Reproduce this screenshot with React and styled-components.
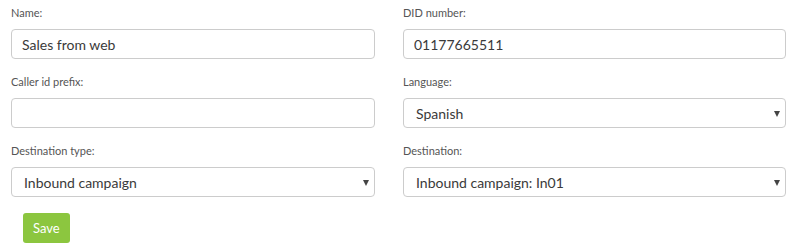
import React from "react";
import styled, { createGlobalStyle } from "styled-components";

const GlobalStyle = createGlobalStyle`
  html, body {
    margin: 0;
    padding: 0;
    background: #fff;
    font-family: Lato, "Open Sans", "Liberation Sans", sans-serif;
  }
`;

const Form = styled.form`
  width: 801px;
  height: 247px;
  box-sizing: border-box;
  padding: 5px 0 0 11px;
`;

const Grid = styled.div`
  display: grid;
  grid-template-columns: 364px 383px;
  column-gap: 28px;
  row-gap: 15px;
`;

const Field = styled.div`
  display: flex;
  flex-direction: column;
`;

const Label = styled.label`
  font-size: 11px;
  line-height: 16px;
  color: #555;
  margin-bottom: 8px;
`;

const TextInput = styled.input`
  box-sizing: border-box;
  width: 100%;
  height: 30px;
  padding: 0 10px;
  border: 1px solid #ccc;
  border-radius: 4px;
  font-family: inherit;
  font-size: 14px;
  color: #3a3a3a;
  background: #fff;
  outline: none;
`;

const SelectWrap = styled.div`
  position: relative;

  &::after {
    content: "";
    position: absolute;
    right: 6px;
    top: 13px;
    border-left: 3.5px solid transparent;
    border-right: 3.5px solid transparent;
    border-top: 6px solid #444;
    pointer-events: none;
  }
`;

const Select = styled.select`
  box-sizing: border-box;
  width: 100%;
  height: 30px;
  padding: 0 12px;
  border: 1px solid #ccc;
  border-radius: 4px;
  font-family: inherit;
  font-size: 14px;
  color: #3a3a3a;
  background: #fff;
  appearance: none;
  -webkit-appearance: none;
  outline: none;
`;

const Actions = styled.div`
  padding: 16px 0 0 12px;
`;

const SaveButton = styled.button`
  height: 30px;
  padding: 0 10px;
  border: none;
  border-radius: 3px;
  background: #8cc63f;
  color: #fff;
  font-family: inherit;
  font-size: 13px;
  cursor: pointer;
`;

function DropDown({ value, options }) {
  return (
    <SelectWrap>
      <Select defaultValue={value}>
        {options.map((o) => (
          <option key={o}>{o}</option>
        ))}
      </Select>
    </SelectWrap>
  );
}

export default function App() {
  return (
    <>
      <GlobalStyle />
      <Form onSubmit={(e) => e.preventDefault()}>
        <Grid>
          <Field>
            <Label>Name:</Label>
            <TextInput defaultValue="Sales from web" />
          </Field>
          <Field>
            <Label>DID number:</Label>
            <TextInput defaultValue="01177665511" />
          </Field>
          <Field>
            <Label>Caller id prefix:</Label>
            <TextInput defaultValue="" />
          </Field>
          <Field>
            <Label>Language:</Label>
            <DropDown value="Spanish" options={["English", "Spanish"]} />
          </Field>
          <Field>
            <Label>Destination type:</Label>
            <DropDown
              value="Inbound campaign"
              options={["Inbound campaign", "Queue", "Extension"]}
            />
          </Field>
          <Field>
            <Label>Destination:</Label>
            <DropDown
              value="Inbound campaign: In01"
              options={["Inbound campaign: In01"]}
            />
          </Field>
        </Grid>
        <Actions>
          <SaveButton type="submit">Save</SaveButton>
        </Actions>
      </Form>
    </>
  );
}
